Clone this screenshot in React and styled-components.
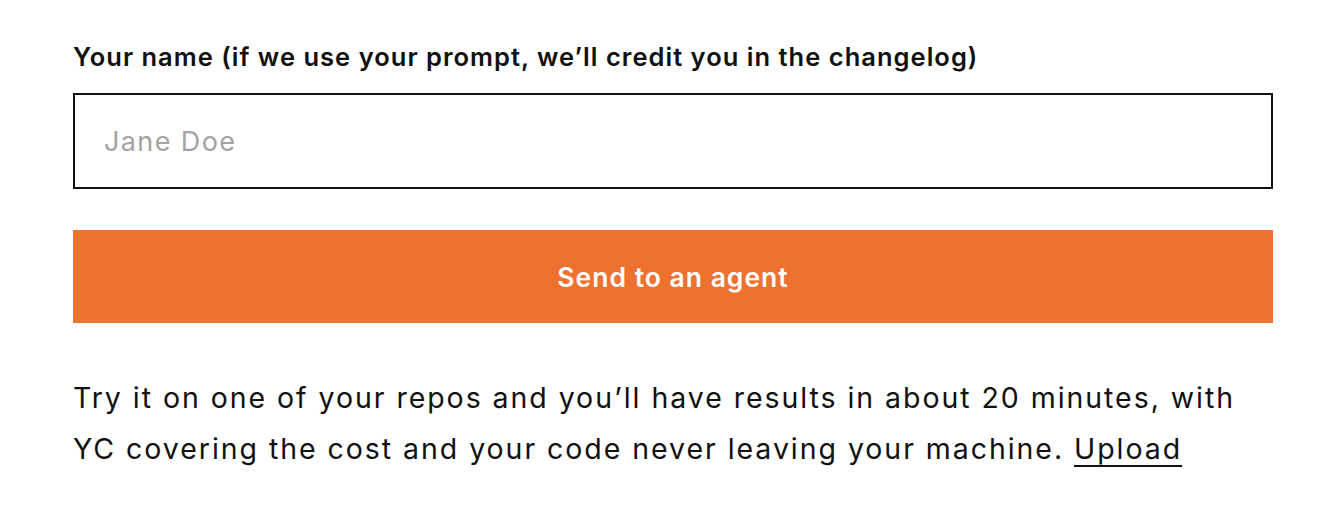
import React from "react";
import styled, { createGlobalStyle } from "styled-components";

const GlobalStyle = createGlobalStyle`
  html, body {
    margin: 0;
    padding: 0;
    background: #ffffff;
  }
  body {
    font-family: Inter, "Noto Sans", sans-serif;
    color: #111111;
  }
`;

const Page = styled.div`
  padding: 39px 57px 0 73px;
`;

const Form = styled.form`
  width: 1200px;
  display: flex;
  flex-direction: column;
`;

const Label = styled.label`
  display: block;
  font-size: 25.5px;
  font-weight: 600;
  line-height: 36px;
  letter-spacing: 1.02px;
  margin-bottom: 18px;
`;

const NameInput = styled.input`
  box-sizing: border-box;
  width: 100%;
  height: 96px;
  border: 2px solid #111111;
  border-radius: 0;
  padding: 0 29px;
  font-family: inherit;
  font-size: 27px;
  letter-spacing: 1.4px;
  color: #111111;
  outline: none;

  &::placeholder {
    color: #a3a3a3;
  }
`;

const SubmitButton = styled.button`
  margin-top: 41px;
  height: 93px;
  width: 100%;
  border: none;
  border-radius: 0;
  background: #ed712f;
  color: #ffffff;
  font-family: inherit;
  font-size: 26.5px;
  font-weight: 600;
  letter-spacing: 1px;
  cursor: pointer;
`;

const Note = styled.p`
  margin: 49px 0 0;
  font-size: 28.5px;
  line-height: 51px;
  letter-spacing: 1.95px;
  color: #111111;
`;

const NoteLink = styled.a`
  color: inherit;
  text-decoration: underline;
  text-underline-offset: 6px;
  text-decoration-thickness: 2px;
`;

export default function App() {
  return (
    <>
      <GlobalStyle />
      <Page>
        <Form onSubmit={e => e.preventDefault()}>
          <Label htmlFor="name">
            Your name (if we use your prompt, we’ll credit you in the changelog)
          </Label>
          <NameInput id="name" type="text" placeholder="Jane Doe" />
          <SubmitButton type="submit">Send to an agent</SubmitButton>
          <Note>
            Try it on one of your repos and you’ll have results in about 20
            minutes, with YC covering the cost and your code never leaving your
            machine. <NoteLink href="#">Upload</NoteLink>
          </Note>
        </Form>
      </Page>
    </>
  );
}
